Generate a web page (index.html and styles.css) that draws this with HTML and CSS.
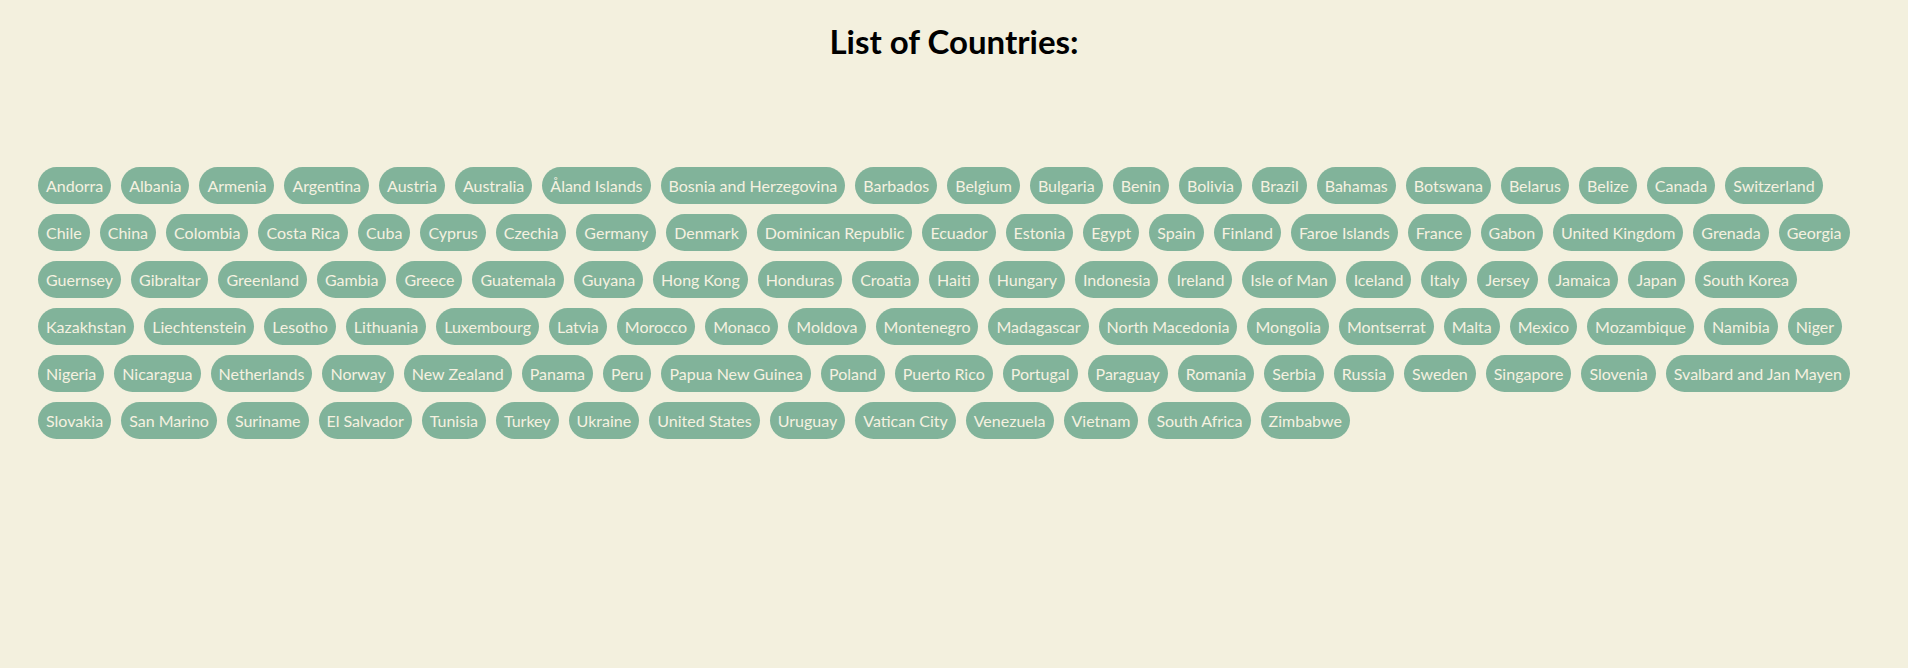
FILE: index.html
```html
<!DOCTYPE html>
<html lang="en">
<head>
<meta charset="utf-8">
<title>List of Countries</title>
<link rel="stylesheet" href="styles.css">
</head>
<body>
<h1 class="title">List of Countries:</h1>
<main class="page">
  <ul class="countries">
    <li class="chip">Andorra</li>
    <li class="chip">Albania</li>
    <li class="chip">Armenia</li>
    <li class="chip">Argentina</li>
    <li class="chip">Austria</li>
    <li class="chip">Australia</li>
    <li class="chip">Åland Islands</li>
    <li class="chip">Bosnia and Herzegovina</li>
    <li class="chip">Barbados</li>
    <li class="chip">Belgium</li>
    <li class="chip">Bulgaria</li>
    <li class="chip">Benin</li>
    <li class="chip">Bolivia</li>
    <li class="chip">Brazil</li>
    <li class="chip">Bahamas</li>
    <li class="chip">Botswana</li>
    <li class="chip">Belarus</li>
    <li class="chip">Belize</li>
    <li class="chip">Canada</li>
    <li class="chip">Switzerland</li>
    <li class="chip">Chile</li>
    <li class="chip">China</li>
    <li class="chip">Colombia</li>
    <li class="chip">Costa Rica</li>
    <li class="chip">Cuba</li>
    <li class="chip">Cyprus</li>
    <li class="chip">Czechia</li>
    <li class="chip">Germany</li>
    <li class="chip">Denmark</li>
    <li class="chip">Dominican Republic</li>
    <li class="chip">Ecuador</li>
    <li class="chip">Estonia</li>
    <li class="chip">Egypt</li>
    <li class="chip">Spain</li>
    <li class="chip">Finland</li>
    <li class="chip">Faroe Islands</li>
    <li class="chip">France</li>
    <li class="chip">Gabon</li>
    <li class="chip">United Kingdom</li>
    <li class="chip">Grenada</li>
    <li class="chip">Georgia</li>
    <li class="chip">Guernsey</li>
    <li class="chip">Gibraltar</li>
    <li class="chip">Greenland</li>
    <li class="chip">Gambia</li>
    <li class="chip">Greece</li>
    <li class="chip">Guatemala</li>
    <li class="chip">Guyana</li>
    <li class="chip">Hong Kong</li>
    <li class="chip">Honduras</li>
    <li class="chip">Croatia</li>
    <li class="chip">Haiti</li>
    <li class="chip">Hungary</li>
    <li class="chip">Indonesia</li>
    <li class="chip">Ireland</li>
    <li class="chip">Isle of Man</li>
    <li class="chip">Iceland</li>
    <li class="chip">Italy</li>
    <li class="chip">Jersey</li>
    <li class="chip">Jamaica</li>
    <li class="chip">Japan</li>
    <li class="chip">South Korea</li>
    <li class="chip">Kazakhstan</li>
    <li class="chip">Liechtenstein</li>
    <li class="chip">Lesotho</li>
    <li class="chip">Lithuania</li>
    <li class="chip">Luxembourg</li>
    <li class="chip">Latvia</li>
    <li class="chip">Morocco</li>
    <li class="chip">Monaco</li>
    <li class="chip">Moldova</li>
    <li class="chip">Montenegro</li>
    <li class="chip">Madagascar</li>
    <li class="chip">North Macedonia</li>
    <li class="chip">Mongolia</li>
    <li class="chip">Montserrat</li>
    <li class="chip">Malta</li>
    <li class="chip">Mexico</li>
    <li class="chip">Mozambique</li>
    <li class="chip">Namibia</li>
    <li class="chip">Niger</li>
    <li class="chip">Nigeria</li>
    <li class="chip">Nicaragua</li>
    <li class="chip">Netherlands</li>
    <li class="chip">Norway</li>
    <li class="chip">New Zealand</li>
    <li class="chip">Panama</li>
    <li class="chip">Peru</li>
    <li class="chip">Papua New Guinea</li>
    <li class="chip">Poland</li>
    <li class="chip">Puerto Rico</li>
    <li class="chip">Portugal</li>
    <li class="chip">Paraguay</li>
    <li class="chip">Romania</li>
    <li class="chip">Serbia</li>
    <li class="chip">Russia</li>
    <li class="chip">Sweden</li>
    <li class="chip">Singapore</li>
    <li class="chip">Slovenia</li>
    <li class="chip">Svalbard and Jan Mayen</li>
    <li class="chip">Slovakia</li>
    <li class="chip">San Marino</li>
    <li class="chip">Suriname</li>
    <li class="chip">El Salvador</li>
    <li class="chip">Tunisia</li>
    <li class="chip">Turkey</li>
    <li class="chip">Ukraine</li>
    <li class="chip">United States</li>
    <li class="chip">Uruguay</li>
    <li class="chip">Vatican City</li>
    <li class="chip">Venezuela</li>
    <li class="chip">Vietnam</li>
    <li class="chip">South Africa</li>
    <li class="chip">Zimbabwe</li>
  </ul>
</main>
</body>
</html>
```
FILE: styles.css
```css
html, body {
  margin: 0;
  padding: 0;
}

body {
  background: #f3f0de;
  font-family: "Lato", "Liberation Sans", sans-serif;
  color: #000;
  min-height: 668px;
}

.title {
  margin: 21px 0 0;
  font-size: 33px;
  line-height: 40px;
  font-weight: 700;
  text-align: center;
}

.page {
  padding: 106px 38px 0;
}

.countries {
  list-style: none;
  margin: 0;
  padding: 0;
  display: flex;
  flex-wrap: wrap;
  gap: 10px;
}

.chip {
  background: #81b39a;
  color: #f5f1e0;
  font-size: 16px;
  line-height: 21px;
  padding: 8px 8px;
  border-radius: 20px;
  white-space: nowrap;
}
```
